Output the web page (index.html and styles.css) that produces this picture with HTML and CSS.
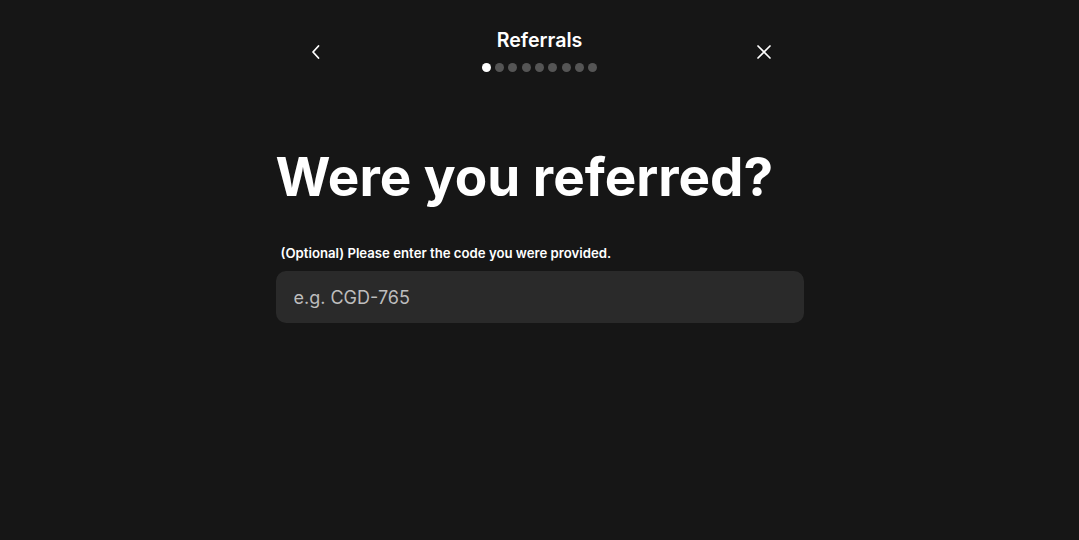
FILE: index.html
```html
<!DOCTYPE html>
<html lang="en">
<head>
    <meta charset="UTF-8">
    <title>Referrals</title>
    <link rel="stylesheet" href="styles.css">
</head>
<body>
    <div class="container">
        <div class="top-bar">
            <button class="icon-btn" aria-label="Back">
                <svg width="16" height="16" viewBox="0 0 16 16"><path d="M10.5 2 L5 8 L10.5 14" fill="none" stroke="#fff" stroke-width="1.8" stroke-linecap="round" stroke-linejoin="round"/></svg>
            </button>
            <div class="title-block">
                <div class="title">Referrals</div>
                <div class="steps">
                    <span class="dot active"></span>
                    <span class="dot"></span>
                    <span class="dot"></span>
                    <span class="dot"></span>
                    <span class="dot"></span>
                    <span class="dot"></span>
                    <span class="dot"></span>
                    <span class="dot"></span>
                    <span class="dot"></span>
                </div>
            </div>
            <button class="icon-btn" aria-label="Close">
                <svg width="16" height="16" viewBox="0 0 16 16"><path d="M2 2 L14 14 M14 2 L2 14" fill="none" stroke="#fff" stroke-width="1.7" stroke-linecap="round"/></svg>
            </button>
        </div>

        <h1 class="heading">Were you referred?</h1>

        <label class="field-label" for="code">(Optional) Please enter the code you were provided.</label>
        <input type="text" id="code" class="code-input" placeholder="e.g. CGD-765">
    </div>
</body>
</html>
```

FILE: styles.css
```css
html, body {
    margin: 0;
    padding: 0;
    background-color: #161616;
    color: #fff;
    font-family: Inter, "Noto Sans", sans-serif;
}
.container {
    width: 528px;
    margin: 0 auto;
    padding-top: 28px;
}
.top-bar {
    display: flex;
    align-items: flex-start;
    justify-content: space-between;
    padding: 0 30px;
}
.icon-btn {
    background: none;
    border: none;
    padding: 0;
    margin-top: 16px;
    width: 20px;
    height: 16px;
    display: flex;
    align-items: center;
    justify-content: center;
    cursor: pointer;
}
.title-block {
    display: flex;
    flex-direction: column;
    align-items: center;
}
.title {
    font-size: 19.6px;
    font-weight: 600;
    line-height: 24px;
}
.steps {
    display: flex;
    gap: 4.3px;
    margin-top: 11px;
}
.dot {
    width: 9px;
    height: 9px;
    border-radius: 50%;
    background-color: #555;
}
.dot.active {
    background-color: #fff;
}
.heading {
    font-size: 53px;
    font-weight: 700;
    margin: 73px 0 0;
    line-height: 64px;
}
.field-label {
    display: block;
    font-size: 13.2px;
    font-weight: 600;
    margin: 36px 0 0 5px;
    line-height: 16px;
}
.code-input {
    display: block;
    box-sizing: border-box;
    width: 528px;
    height: 52px;
    margin-top: 10px;
    padding: 0 18px;
    background-color: #2a2a2a;
    border: none;
    border-radius: 10px;
    color: #fff;
    font-family: Inter, "Noto Sans", sans-serif;
    font-size: 18px;
    outline: none;
}
.code-input::placeholder {
    color: #bdbdbd;
}
```
